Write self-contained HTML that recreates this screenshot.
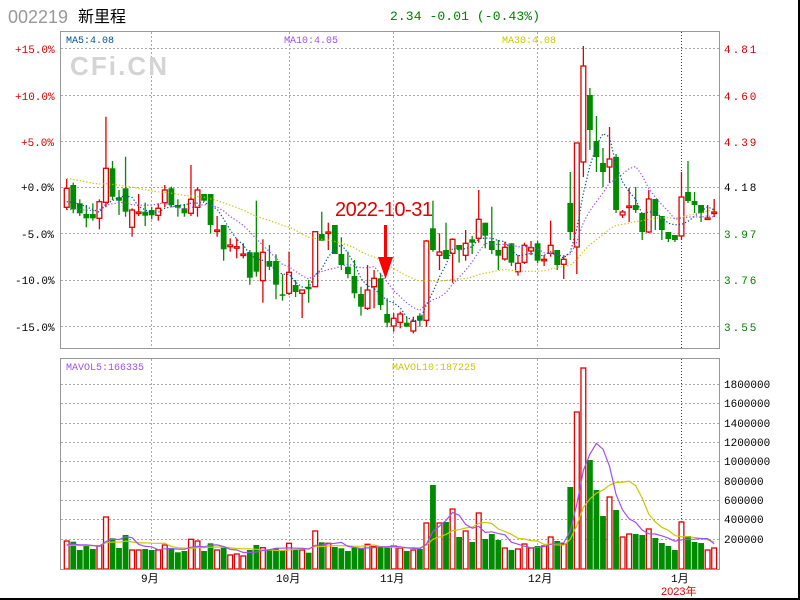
<!DOCTYPE html>
<html><head><meta charset="utf-8"><style>
html,body{margin:0;padding:0;background:#fff;}
svg{display:block;}
text{font-family:"Liberation Mono",monospace;}
</style></head><body>
<svg id="s" width="800" height="600" xmlns="http://www.w3.org/2000/svg">
<rect x="0" y="0" width="800" height="600" fill="#fff"/>
<line x1="799" y1="0" x2="799" y2="600" stroke="#000" stroke-width="2"/>
<line x1="0" y1="599" x2="800" y2="599" stroke="#000" stroke-width="2"/>
<text x="8" y="23" font-family="Liberation Sans, sans-serif" font-size="18" fill="#999" style="font-family:'Liberation Sans',sans-serif">002219</text>
<text x="78" y="22" font-size="16" fill="#000" style="font-family:'Liberation Sans','Noto Sans CJK SC',sans-serif">新里程</text>
<text x="390" y="20" font-size="13" fill="#008000" textLength="150">2.34 -0.01 (-0.43%)</text>
<g id="grid"></g>
<text x="70" y="75" font-size="26" font-weight="bold" fill="#d4d4d4" style="font-family:'Liberation Sans',sans-serif" textLength="97">CFi.CN</text>
<g id="c"></g>
<rect x="60.5" y="31.5" width="659" height="317" fill="none" stroke="#999"/>
<rect x="60.5" y="358.5" width="659" height="211" fill="none" stroke="#999"/>
<text x="66" y="43" font-size="10" fill="#00529b">MA5:4.08</text>
<text x="284" y="43" font-size="10" fill="#a050f0">MA10:4.05</text>
<text x="502" y="43" font-size="10" fill="#c8c800">MA30:4.08</text>
<text x="66" y="370" font-size="10" fill="#a050f0">MAVOL5:166335</text>
<text x="392" y="370" font-size="10" fill="#c8c800">MAVOL10:187225</text>
<text x="335" y="216" font-size="20" fill="#e00000" textLength="98" style="font-family:'Liberation Sans',sans-serif">2022-10-31</text>
<rect x="384" y="225" width="3" height="42" fill="#f00"/>
<polygon points="378,257 393,257 385.5,279" fill="#f00"/>
<g font-size="11" fill="#000">
<text x="141" y="582">9月</text><text x="276" y="582">10月</text><text x="380" y="582">11月</text><text x="528" y="582">12月</text><text x="671" y="582">1月</text>
<text x="661" y="595" fill="#e00000" style="font-family:'Liberation Sans','Noto Sans CJK SC',sans-serif">2023年</text>
</g>
<g font-size="11">
<text x="15" y="53" fill="#d00000">+15.0%</text>
<text x="15" y="100" fill="#d00000">+10.0%</text>
<text x="21" y="146" fill="#d00000">+5.0%</text>
<text x="21" y="191" fill="#000">+0.0%</text>
<text x="21" y="238" fill="#000">-5.0%</text>
<text x="15" y="284" fill="#000">-10.0%</text>
<text x="15" y="331" fill="#000">-15.0%</text>
<text x="724" y="53" fill="#d00000" letter-spacing="2">4.81</text>
<text x="724" y="100" fill="#d00000" letter-spacing="2">4.60</text>
<text x="724" y="146" fill="#d00000" letter-spacing="2">4.39</text>
<text x="724" y="191" fill="#000" letter-spacing="2">4.18</text>
<text x="724" y="238" fill="#008000" letter-spacing="2">3.97</text>
<text x="724" y="284" fill="#008000" letter-spacing="2">3.76</text>
<text x="724" y="331" fill="#008000" letter-spacing="2">3.55</text>
</g>
<g font-size="11" fill="#000" id="vl"></g>
</svg>
<script>
var NS="http://www.w3.org/2000/svg";
function el(p,t,a){var e=document.createElementNS(NS,t);for(var k in a)e.setAttribute(k,a[k]);p.appendChild(e);return e;}
var g=document.getElementById('grid'),c=document.getElementById('c'),vl=document.getElementById('vl');
[48,95,141,187,233,280,326].forEach(function(y){el(g,'line',{x1:61,x2:719,y1:y+.5,y2:y+.5,stroke:'#aaa','stroke-dasharray':'2 2'});});
var vy=[384,403,423,442,461,481,500,519,539];
vy.forEach(function(y,i){el(g,'line',{x1:61,x2:719,y1:y+.5,y2:y+.5,stroke:'#aaa','stroke-dasharray':'2 2'});
 var t=el(vl,'text',{x:724,y:y+4});t.textContent=String((9-i)*200000);});
[151,289,393,537].forEach(function(x){el(g,'line',{x1:x+.5,x2:x+.5,y1:32,y2:348,stroke:'#aaa','stroke-dasharray':'2 2'});el(g,'line',{x1:x+.5,x2:x+.5,y1:359,y2:569,stroke:'#aaa','stroke-dasharray':'2 2'});});
el(g,'line',{x1:681.5,x2:681.5,y1:32,y2:348,stroke:'#e00','stroke-dasharray':'1 2'});
el(g,'line',{x1:681.5,x2:681.5,y1:359,y2:569,stroke:'#e00','stroke-dasharray':'1 2'});
var D=[['r',188.3,207.3,179,210],['g',185,209.3,182.7,213.3],['g',203.3,213.3,199.3,216],['g',214,218.3,205,227.3],['g',214,218.3,203.3,220.7],['r',201.7,218.3,199.3,229.3],['r',168.3,202.3,116.7,207.3],['g',168.3,196.7,161,200],['g',197.3,200.7,190,215],['g',188.3,211.7,156.7,216.7],['r',210,227.3,208.3,236.7],['r',212,213.3,194,216],['g',211.7,215.7,202.7,226],['g',210,215.3,206.7,219.3],['r',208.3,215.3,203.3,220.7],['r',190,202.7,185,207.3],['g',188.3,205,186.7,206.7],['g',205,207.7,199.3,216.7],['g',208.3,213.3,204,216.7],['r',199.3,213.3,165,216],['r',190,207.3,187.3,216.7],['g',194,200.7,194,201.7],['g',194,225,194,233.3],['r',230,231.3,216,236.7],['g',225,249.3,225,260.7],['r',245,246.7,238.3,251.7],['r',246.7,247.7,238.3,258.3],['r',254,254.7,243.3,258.3],['g',252.3,277.7,250,284.7],['g',252.3,271.7,200.7,276.7],['r',252.3,280.7,239.3,302.7],['g',261,266.7,245,270],['g',261,284.7,254.3,299.3],['g',294.3,295.7,274.3,300.7],['r',272.3,293.3,251.7,295],['g',285,292,280,297],['r',290,293.3,290,318],['g',286.7,289.3,280,302.7],['r',231.7,286.7,231.7,286.7],['g',234,240.7,211.7,240.7],['r',232,233.3,222.7,250],['g',225,254,225,254],['g',254,265,237.3,270],['g',266.7,274,251.7,278.3],['g',276,293.3,260,298.3],['g',294,306.7,286.7,315.7],['r',290,308.3,265,310],['r',278.3,286.7,270,308.3],['g',278.3,305,273.3,310],['g',314,322.7,298.3,327.3],['r',318.3,326,313.3,331.7],['r',314,322.3,311.7,328.3],['g',322.7,326.7,316.7,326.7],['r',321.3,331,316.7,333.3],['g',315.7,320.7,313.3,326.7],['r',241,320.3,240,326.7],['g',228.3,250,200.7,251.7],['r',252,255.3,233.3,270],['g',250,259,222.7,259],['r',239.3,253.3,238.3,282.7],['g',245,249.3,245,262.7],['r',243.3,255.3,230,260.7],['g',239.3,242.7,236,254],['r',219.3,238.3,190,242.7],['g',222.7,235.7,222.7,248.3],['g',241,250,206.7,254],['g',250,255.7,240,270],['r',247.3,259,241.7,260.7],['g',243.3,262.7,243.3,266],['r',263.3,271.7,255,275.7],['r',245.3,262.3,242.7,264],['r',247.7,251,241,255],['g',243.3,260.7,240.7,263.3],['r',259.3,260.3,255,266],['r',245.3,253.3,220.7,256.7],['g',250,265,250,270],['r',259.3,264.3,255,279],['g',203,232,172,240],['r',143,247,143,274],['r',66,162,46,177],['g',95,130,88,150],['g',141,157,116,172],['g',163,172,148,187],['r',159,167,127,183],['g',157,210,154,213],['r',212,215,210,218],['r',206,207,188,222],['g',205,210,187,213],['g',213,232,213,240],['r',199,232,190,233],['g',199,216,199,230],['g',216,230,216,240],['g',232,239,232,242],['g',235,240,235,242],['r',197,236,172,240],['g',192,201,161,203],['g',201,205,192,213],['g',205,213,205,222],['r',218,219,205,220],['r',212,213,199,217]];
var V=[541,541.7,550,545.7,549,545.7,517,538.3,548,535,550,550,549,550,550,545,548.3,552.3,551,539.3,541,551,543.3,550,547.7,555,554,556,550,545,547.7,550,548.3,550,543.3,549.3,550,552.7,531,542.3,543.3,547,548.3,551,547.7,548.3,544.3,546.7,547,547,546,548,551,550,549,523,485,523,522,509,537,531,542,513,539,534,540,548,550,549,544,548,546,546,537,541,544,487,412,368,460,490,516,497,510,537,534,534,535,529,538,543,546,550,522,536,542,543,550,548];
var RED='#e00000',GRN='#008c00';
function X(i){return 66.7+6.54*i;}
var closes=[];
D.forEach(function(d,i){var x=X(i),col=d[0]=='r'?RED:GRN;
 el(c,'line',{x1:x,x2:x,y1:d[3],y2:d[4],stroke:col,'stroke-width':1.3});
 var h=Math.max(d[2]-d[1],1.5);
 if(d[0]=='r')el(c,'rect',{x:x-2.4,y:d[1],width:4.8,height:h,fill:'#fff',stroke:col,'stroke-width':1.3});
 else el(c,'rect',{x:x-2.9,y:d[1],width:5.8,height:h,fill:col});
 closes.push(d[0]=='r'?d[1]:d[2]);
 var vt=V[i];
 if(d[0]=='r')el(c,'rect',{x:x-2.4,y:vt,width:4.8,height:569-vt,fill:'#fff',stroke:col,'stroke-width':1.3});
 else el(c,'rect',{x:x-2.9,y:vt,width:5.8,height:569-vt,fill:col});
});
function ma(arr,n,pad){var out=[];for(var i=0;i<arr.length;i++){var s=0;for(var k=i-n+1;k<=i;k++)s+=(k<0?pad:arr[k]);out.push(s/n);}return out;}
function line(vals,col,dash,w){var p=vals.map(function(v,i){return X(i).toFixed(1)+','+v.toFixed(1);}).join(' ');var a={points:p,fill:'none',stroke:col,'stroke-width':w||1.2};if(dash)a['stroke-dasharray']=dash;el(c,'polyline',a);}
line(ma(closes,30,178),'#c8c800','1.3 2');
line(ma(closes,10,212),'#a050f0','1.3 2');
line(ma(closes,5,205),'#00529b','1.3 2');
line(ma(V,10,546),'#c8c800',null,1.2);
line(ma(V,5,546),'#a050f0',null,1.2);
</script>
</body></html>
